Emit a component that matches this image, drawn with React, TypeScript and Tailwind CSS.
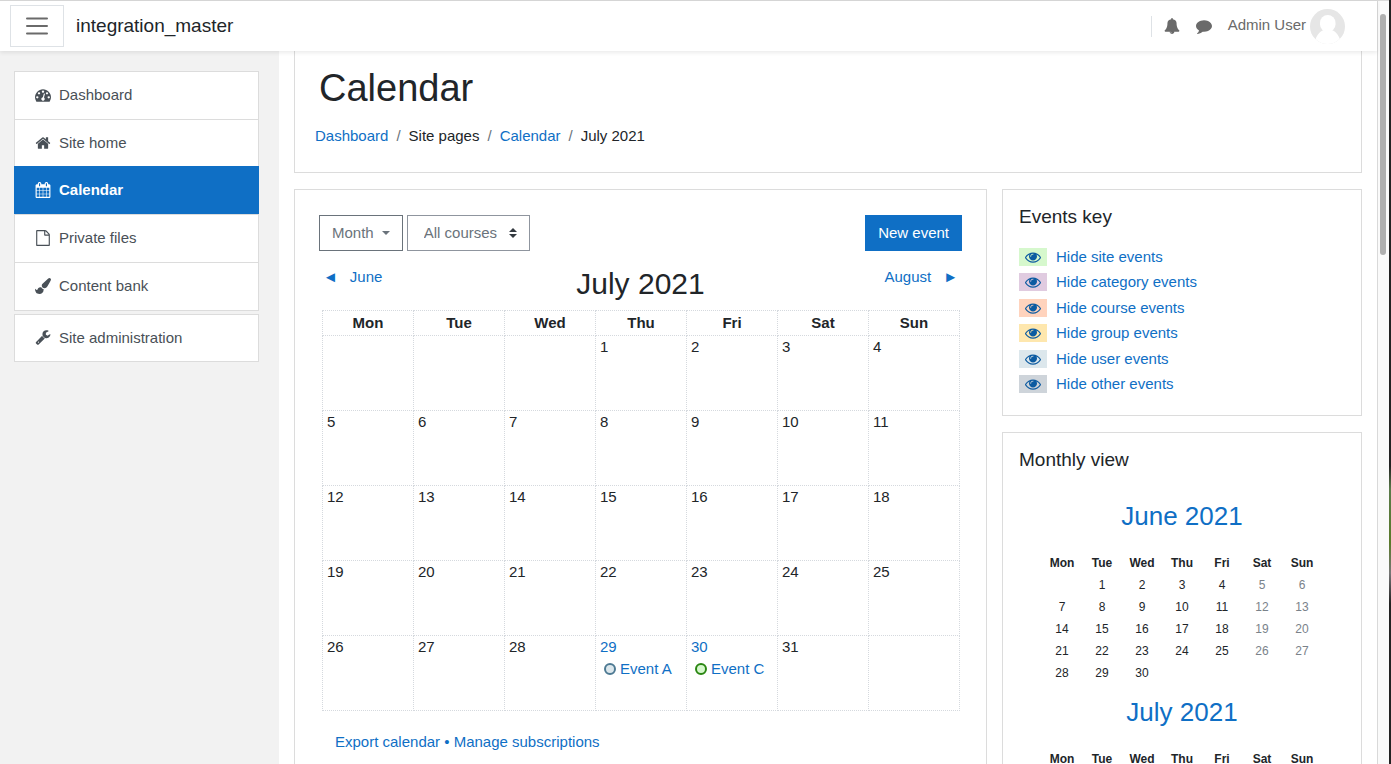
import { useState } from 'react';

// Font Awesome 4 glyphs, 1792 grid
const ICONS = {
  dashboard:
    'M384 1152q0-53-37.5-90.5t-90.5-37.5-90.5 37.5-37.5 90.5 37.5 90.5 90.5 37.5 90.5-37.5 37.5-90.5zm192-448q0-53-37.5-90.5t-90.5-37.5-90.5 37.5-37.5 90.5 37.5 90.5 90.5 37.5 90.5-37.5 37.5-90.5zm428 481l101-382q6-26-7.5-48.5t-38.5-29.5-48 6.5-30 39.5l-101 382q-60 5-107 43.5t-63 98.5q-20 77 20 146t117 89 146-20 89-117q16-60-6-117t-72-91zm660-33q0-53-37.5-90.5t-90.5-37.5-90.5 37.5-37.5 90.5 37.5 90.5 90.5 37.5 90.5-37.5 37.5-90.5zm-640-640q0-53-37.5-90.5t-90.5-37.5-90.5 37.5-37.5 90.5 37.5 90.5 90.5 37.5 90.5-37.5 37.5-90.5zm448 192q0-53-37.5-90.5t-90.5-37.5-90.5 37.5-37.5 90.5 37.5 90.5 90.5 37.5 90.5-37.5 37.5-90.5zm320 448q0 261-141 483-19 29-54 29h-1402q-35 0-54-29-141-221-141-483 0-182 71-348t191-286 286-191 348-71 348 71 286 191 191 286 71 348z',
  home:
    'M1472 992v480q0 26-19 45t-45 19h-384v-384h-256v384h-384q-26 0-45-19t-19-45v-480q0-1 .5-3t.5-3l575-474 575 474q1 2 1 6zm223-69l-62 74q-8 9-21 11h-3q-13 0-21-7l-692-577-692 577q-12 8-24 7-13-2-21-11l-62-74q-8-10-7-23.5t11-21.5l719-599q32-26 76-26t76 26l244 204v-195q0-14 9-23t23-9h192q14 0 23 9t9 23v408l219 182q10 8 11 21.5t-7 23.5z',
  calendar:
    'M192 1664h288v-288h-288v288zm352 0h320v-288h-320v288zm-352-352h288v-320h-288v320zm352 0h320v-320h-320v320zm-352-384h288v-288h-288v288zm736 736h320v-288h-320v288zm-384-736h320v-288h-320v288zm768 736h288v-288h-288v288zm-384-352h320v-320h-320v320zm-352-864v-288q0-13-9.5-22.5t-22.5-9.5h-64q-13 0-22.5 9.5t-9.5 22.5v288q0 13 9.5 22.5t22.5 9.5h64q13 0 22.5-9.5t9.5-22.5zm736 864h288v-320h-288v320zm-384-384h320v-288h-320v288zm384 0h288v-288h-288v288zm32-480v-288q0-13-9.5-22.5t-22.5-9.5h-64q-13 0-22.5 9.5t-9.5 22.5v288q0 13 9.5 22.5t22.5 9.5h64q13 0 22.5-9.5t9.5-22.5zm384-64v1280q0 52-38 90t-90 38h-1408q-52 0-90-38t-38-90v-1280q0-52 38-90t90-38h128v-96q0-66 47-113t113-47h64q66 0 113 47t47 113v96h384v-96q0-66 47-113t113-47h64q66 0 113 47t47 113v96h128q52 0 90 38t38 90z',
  file:
    'M1596 380q28 28 48 76t20 88v1152q0 40-28 68t-68 28h-1344q-40 0-68-28t-28-68v-1600q0-40 28-68t68-28h896q40 0 88 20t76 48zm-444-244v376h376q-10-29-22-41l-313-313q-12-12-41-22zm384 1528v-1024h-416q-40 0-68-28t-28-68v-416h-768v1536h1280z',
  brush:
    'M1615 0q70 0 122.5 46.5t52.5 116.5q0 63-45 151-332 629-465 752-97 91-218 91-126 0-216.5-92.5t-90.5-219.5q0-128 92-212l638-579q59-54 130-54zm-909 1034q39 76 106.5 130t150.5 76l1 71q4 213-129.5 347t-348.5 134q-123 0-218-46.5t-152.5-127.5-86.5-183-29-220q7 5 41 30t62 44.5 59 36.5 46 17q41 0 55-37 25-66 57.5-112.5t69.5-76 88-47.5 103-25.5 125-10.5z',
  wrench:
    'M448 1472q0-26-19-45t-45-19-45 19-19 45 19 45 45 19 45-19 19-45zm644-420l-682 682q-37 37-90 37-52 0-91-37l-106-108q-38-36-38-90 0-53 38-91l681-681q39 98 114.5 173.5t173.5 114.5zm634-435q0 39-23 106-47 134-164.5 217.5t-258.5 83.5q-185 0-316.5-131.5t-131.5-316.5 131.5-316.5 316.5-131.5q58 0 121.5 16.5t107.5 46.5q16 11 16 28t-16 28l-293 169v224l193 107q5-3 79-48.5t135.5-81 70.5-35.5q15 0 23.5 10t8.5 25z',
  bell:
    'M912 1696q0-16-16-16-59 0-101.5-42.5t-42.5-101.5q0-16-16-16t-16 16q0 73 51.5 124.5t124.5 51.5q16 0 16-16zm816-288q0 52-38 90t-90 38h-448q0 106-75 181t-181 75-181-75-75-181h-448q-52 0-90-38t-38-90q50-42 91-88t85-119.5 74.5-158.5 50-206 19.5-260q0-152 117-282.5t307-158.5q-8-19-8-39 0-40 28-68t68-28 68 28 28 68q0 20-8 39 190 28 307 158.5t117 282.5q0 139 19.5 260t50 206 74.5 158.5 85 119.5 91 88z',
  comment:
    'M1792 896q0 174-120 321.5t-326 233-450 85.5q-70 0-145-8-198 175-460 242-49 14-114 22-17 2-30.5-9t-17.5-29v-1q-3-4-.5-12t2-10 4.5-9.5l6-9 7-8.5 8-9q7-8 31-34.5t34.5-38 31-39.5 32.5-51 27-59 26-76q-157-89-247.5-220t-90.5-281q0-130 71-248.5t191-204.5 286-136.5 348-50.5q244 0 450 85.5t326 233 120 321.5z',
  eye:
    'M1664 960q-152-236-381-353 61 104 61 225 0 185-131.5 316.5t-316.5 131.5-316.5-131.5-131.5-316.5q0-121 61-225-229 117-381 353 133 205 333.5 326.5t434.5 121.5 434.5-121.5 333.5-326.5zm-720-384q0-20-14-34t-34-14q-125 0-214.5 89.5t-89.5 214.5q0 20 14 34t34 14 34-14 14-34q0-86 61-147t147-61q20 0 34-14t14-34zm848 384q0 34-20 69-140 230-376.5 368.5t-499.5 138.5-499.5-139-376.5-368q-20-35-20-69t20-69q140-229 376.5-368t499.5-139 499.5 139 376.5 368q20 35 20 69z',
};

type IconName = keyof typeof ICONS;

function Icon({ name, className = '' }: { name: IconName; className?: string }) {
  return (
    <svg viewBox="0 0 1792 1792" fill="currentColor" aria-hidden="true" className={`size-4 shrink-0 ${className}`}>
      <path d={ICONS[name]} />
    </svg>
  );
}

const DAYS = ['Mon', 'Tue', 'Wed', 'Thu', 'Fri', 'Sat', 'Sun'];

const NAV: { label: string; icon: IconName }[] = [
  { label: 'Dashboard', icon: 'dashboard' },
  { label: 'Site home', icon: 'home' },
  { label: 'Calendar', icon: 'calendar' },
  { label: 'Private files', icon: 'file' },
  { label: 'Content bank', icon: 'brush' },
];

const EVENT_KEYS = [
  { label: 'Hide site events', swatch: 'bg-[#d6f8cd]' },
  { label: 'Hide category events', swatch: 'bg-[#e0cbe0]' },
  { label: 'Hide course events', swatch: 'bg-[#ffd3bd]' },
  { label: 'Hide group events', swatch: 'bg-[#fee7ae]' },
  { label: 'Hide user events', swatch: 'bg-[#dce7ec]' },
  { label: 'Hide other events', swatch: 'bg-[#ced4da]' },
];

const EVENTS: Record<number, { title: string; dot: string }> = {
  29: { title: 'Event A', dot: 'border-[#4e7a93] bg-[#dce7ec]' },
  30: { title: 'Event C', dot: 'border-[#2b8713] bg-[#d6f8cd]' },
};

// Splits a month into Monday-first weeks; null marks an empty cell
function getWeeks(firstDay: number, length: number) {
  const cells: (number | null)[] = [
    ...Array(firstDay).fill(null),
    ...Array.from({ length }, (_, i) => i + 1),
  ];
  while (cells.length % 7 !== 0) cells.push(null);
  const weeks: (number | null)[][] = [];
  for (let i = 0; i < cells.length; i += 7) weeks.push(cells.slice(i, i + 7));
  return weeks;
}

function MonthTable() {
  return (
    <table className="w-full table-fixed border-collapse">
      <thead>
        <tr>
          {DAYS.map((day) => (
            <th key={day} scope="col" className="h-[25px] border border-dotted border-[#d5d9de] p-0 text-center font-bold leading-[22px]">
              {day}
            </th>
          ))}
        </tr>
      </thead>
      <tbody>
        {getWeeks(3, 31).map((week, w) => (
          <tr key={w}>
            {week.map((day, d) => {
              const event = day ? EVENTS[day] : undefined;
              return (
                <td key={d} className="h-[75px] border border-dotted border-[#d5d9de] p-0 pl-1 align-top leading-[22px]">
                  {event ? <a href="#" className="text-[#0f6fc5]">{day}</a> : day}
                  {event && (
                    <a href="#" className="flex items-center gap-1 pl-1 text-[#0f6fc5]">
                      <span className={`size-3 shrink-0 rounded-full border-2 ${event.dot}`} />
                      <span className="whitespace-nowrap">{event.title}</span>
                    </a>
                  )}
                </td>
              );
            })}
          </tr>
        ))}
      </tbody>
    </table>
  );
}

function MiniMonth({ title, firstDay, length }: { title: string; firstDay: number; length: number }) {
  return (
    <table className="mx-auto mb-3 w-[280px] table-fixed text-xs">
      <caption className="pb-5 text-[26px] leading-8">
        <a href="#" className="text-[#0f6fc5]">{title}</a>
      </caption>
      <thead>
        <tr>
          {DAYS.map((day) => (
            <th key={day} scope="col" className="h-[22px] p-0 text-center font-bold">{day}</th>
          ))}
        </tr>
      </thead>
      <tbody>
        {getWeeks(firstDay, length).map((week, w) => (
          <tr key={w}>
            {week.map((day, d) => (
              <td key={d} className={`h-[22px] p-0 text-center ${d > 4 ? 'text-[#7a828a]' : ''}`}>{day}</td>
            ))}
          </tr>
        ))}
      </tbody>
    </table>
  );
}

function Header({ onToggle }: { onToggle: () => void }) {
  return (
    <header className="relative z-10 flex h-[51px] shrink-0 items-center border-t border-[#d5d5d5] bg-white pl-2.5 pr-8 shadow-[0_2px_4px_rgba(0,0,0,0.08)]">
      <button
        type="button"
        aria-label="Side panel"
        onClick={onToggle}
        className="flex h-[42px] w-[54px] items-center justify-center border border-[#dee2e6] text-[#6a6a6a]"
      >
        <svg viewBox="0 0 24 20" className="h-5 w-6" stroke="currentColor" strokeWidth="2" strokeLinecap="round" aria-hidden="true">
          <path d="M2 2.5h20M2 10h20M2 17.5h20" />
        </svg>
      </button>
      <a href="#" className="ml-3 text-[19px] leading-7">integration_master</a>
      <div className="ml-auto flex items-center text-[#6a6a6a]">
        <span className="h-[21px] w-px bg-[#dee2e6]" />
        <button type="button" aria-label="Notifications" className="ml-3">
          <Icon name="bell" />
        </button>
        <button type="button" aria-label="Messages" className="ml-4">
          <Icon name="comment" />
        </button>
        <a href="#" className="ml-4 flex items-center gap-1">
          <span className="pb-0.5 leading-[22px]">Admin User</span>
          <svg viewBox="0 0 35 35" className="size-[35px] rounded-full" aria-hidden="true">
            <rect width="35" height="35" fill="#e6e6e6" />
            <rect x="10" y="6" width="15.500" height="17" rx="7.700" fill="#fff" />
            <path d="M0 35V30.500H5.500C7 26 10 22 14 21h7.500C25.500 22 28.500 26 30 30.500h5V35z" fill="#fff" />
          </svg>
        </a>
      </div>
    </header>
  );
}

function NavDrawer() {
  return (
    <aside className="w-[279px] shrink-0 bg-[#f2f2f2] py-5 pl-3.5 pr-5">
      <nav className="text-[#495057]">
        {NAV.map(({ label, icon }) => (
          <a
            key={label}
            href="#"
            className={`flex h-12 items-center gap-2 border border-b-0 px-5 ${
              label === 'Calendar'
                ? 'relative -mt-px border-[#0f6fc5] bg-[#0f6fc5] font-bold text-white'
                : 'border-[#dcdcdc] bg-white'
            }`}
          >
            <Icon name={icon} className="-mt-0.5" />
            {label}
          </a>
        ))}
        <div className="border-t border-[#dcdcdc] pt-[3px]">
          <a href="#" className="flex h-12 items-center gap-2 border border-[#dcdcdc] bg-white px-5">
            <Icon name="wrench" className="-mt-0.5" />
            Site administration
          </a>
        </div>
      </nav>
    </aside>
  );
}

function Breadcrumb() {
  const crumbs = [
    { label: 'Dashboard', link: true },
    { label: 'Site pages', link: false },
    { label: 'Calendar', link: true },
    { label: 'July 2021', link: false },
  ];
  return (
    <nav aria-label="Navigation bar">
      <ol className="flex leading-[22px]">
        {crumbs.map(({ label, link }, i) => (
          <li key={label} className="flex">
            {i > 0 && <span className="px-2 text-[#6a737b]">/</span>}
            {link ? <a href="#" className="text-[#0f6fc5]">{label}</a> : <span>{label}</span>}
          </li>
        ))}
      </ol>
    </nav>
  );
}

export default function App() {
  const [drawerOpen, setDrawerOpen] = useState(true);

  return (
    <div className="flex h-screen overflow-hidden bg-white font-['Liberation_Sans',Arial,sans-serif] text-[15px] text-[#212529]">
      <div className="flex min-w-0 flex-1 flex-col">
        <Header onToggle={() => setDrawerOpen(!drawerOpen)} />

        <div className="flex min-h-0 flex-1">
          {drawerOpen && <NavDrawer />}

          <main className="min-w-0 flex-1 overflow-hidden px-[15px]">
            <section className="border border-t-0 border-[#dcdcdc] px-5 pb-[25px] pt-3.5">
              <h1 className="mb-3.5 pl-1 text-[38px] leading-[46px]">Calendar</h1>
              <Breadcrumb />
            </section>

            <div className="mt-4 flex gap-[15px]">
              <section className="min-w-0 flex-1 border border-[#dcdcdc] px-6 pb-12 pt-[25px]">
                <div className="flex items-center gap-1">
                  <button type="button" className="flex h-9 items-center gap-2 border border-[#6a737b] px-3 text-[#6a737b]">
                    Month
                    <svg viewBox="0 0 8 4" className="h-1 w-2" fill="currentColor" aria-hidden="true">
                      <path d="M0 0h8L4 4z" />
                    </svg>
                  </button>
                  <div className="relative">
                    <select aria-label="Course" className="h-9 w-[123px] appearance-none border border-[#8f959e] bg-white pl-4 pr-6 text-[#6a737b]">
                      <option>All courses</option>
                    </select>
                    <svg viewBox="0 0 8 10" className="pointer-events-none absolute right-[13px] top-[13px] h-2.5 w-2" fill="#343a40" aria-hidden="true">
                      <path d="M0 4h8L4 0zM0 6h8L4 10z" />
                    </svg>
                  </div>
                  <button type="button" className="ml-auto h-9 bg-[#0f6fc5] px-[13px] text-white">New event</button>
                </div>

                <div className="mt-[15px] grid grid-cols-3 px-1">
                  <a href="#" className="flex gap-3 justify-self-start leading-[22px] text-[#0f6fc5]">
                    <span>◄</span>
                    <span>June</span>
                  </a>
                  <h2 className="mb-2 text-center text-3xl leading-9">July 2021</h2>
                  <a href="#" className="flex gap-3 justify-self-end leading-[22px] text-[#0f6fc5]">
                    <span>August</span>
                    <span>►</span>
                  </a>
                </div>

                <div className="pl-[3px] pr-0.5">
                  <MonthTable />
                </div>

                <p className="mt-5 pl-4 leading-[22px]">
                  <a href="#" className="text-[#0f6fc5]">Export calendar</a>
                  <span className="text-[#0f6fc5]"> • </span>
                  <a href="#" className="text-[#0f6fc5]">Manage subscriptions</a>
                </p>
              </section>

              <div className="w-[360px] shrink-0 space-y-4">
                <section className="border border-[#dcdcdc] px-4 pb-[18px] pt-4">
                  <h3 className="text-[19px] leading-[22px]">Events key</h3>
                  <ul className="mt-4 grid h-[153px] auto-rows-fr">
                    {EVENT_KEYS.map(({ label, swatch }) => (
                      <li key={label} className="flex items-center">
                        <a href="#" className="flex items-center gap-[9px] text-[#0f6fc5]">
                          <span className={`flex h-[18px] w-7 items-center justify-center ${swatch}`}>
                            <Icon name="eye" className="text-[#0c5ba1]" />
                          </span>
                          {label}
                        </a>
                      </li>
                    ))}
                  </ul>
                </section>

                <section className="border border-[#dcdcdc] px-4 pb-4 pt-4">
                  <h3 className="mb-[29px] text-[19px] leading-[22px]">Monthly view</h3>
                  <MiniMonth title="June 2021" firstDay={1} length={30} />
                  <MiniMonth title="July 2021" firstDay={3} length={31} />
                </section>
              </div>
            </div>
          </main>
        </div>
      </div>

      {/* Scrollbar and window edge */}
      <div className="w-3 shrink-0 border-l border-t border-[#d9d9d9] bg-[#fafafa] pl-0.5 pt-[13px]">
        <div className="h-[241px] w-1.5 rounded-full bg-[#afafaf]" />
      </div>
      <div className="w-0.5 shrink-0 bg-[linear-gradient(#222_0_61%,#5a7a4a_64%,#5a7a2a_71%,#777_75%,#222_79%)]" />
    </div>
  );
}
